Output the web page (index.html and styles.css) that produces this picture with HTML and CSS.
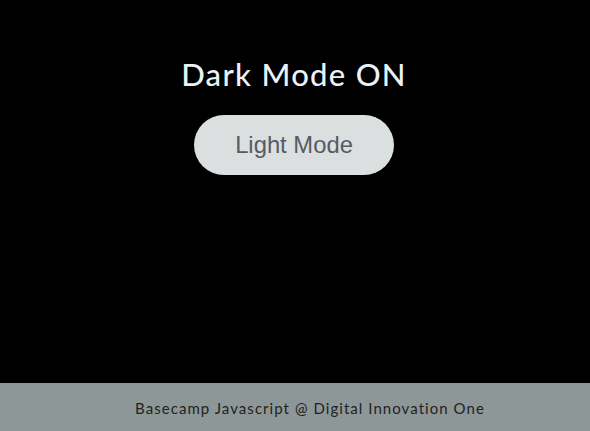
FILE: index.html
```html
<!DOCTYPE html>
<html>
<head>
<meta charset="utf-8">
<link rel="stylesheet" href="styles.css">
</head>
<body>
<div class="page">
  <main class="content">
    <h1 class="title">Dark Mode ON</h1>
    <button class="toggle">Light Mode</button>
  </main>
  <footer class="footer">Basecamp Javascript @ Digital Innovation One</footer>
</div>
</body>
</html>
```
FILE: styles.css
```css
html, body {
  margin: 0;
  padding: 0;
  background: #000;
}
.page {
  display: flex;
  flex-direction: column;
  height: 431px;
}
.content {
  flex: 1;
  display: flex;
  flex-direction: column;
  align-items: center;
  padding-top: 56px;
  padding-right: 2px;
  box-sizing: border-box;
}
.title {
  margin: 0;
  font-family: Lato, "Noto Sans", sans-serif;
  font-weight: 500;
  font-size: 31px;
  line-height: 36px;
  color: #eaf2f8;
  letter-spacing: 1.3px;
}
.toggle {
  margin-top: 23px;
  width: 200px;
  height: 60px;
  border: none;
  border-radius: 30px;
  background: #dcdfe0;
  color: #555c64;
  font-family: "Liberation Sans", Arial, sans-serif;
  font-size: 23.8px;
  padding: 0;
}
.footer {
  height: 48px;
  background: #8e9797;
  display: flex;
  align-items: center;
  justify-content: center;
  font-family: Lato, "Noto Sans", sans-serif;
  font-size: 15px;
  color: #222;
  letter-spacing: 1.05px;
  padding-top: 2px;
  padding-left: 30px;
  box-sizing: border-box;
}
```
